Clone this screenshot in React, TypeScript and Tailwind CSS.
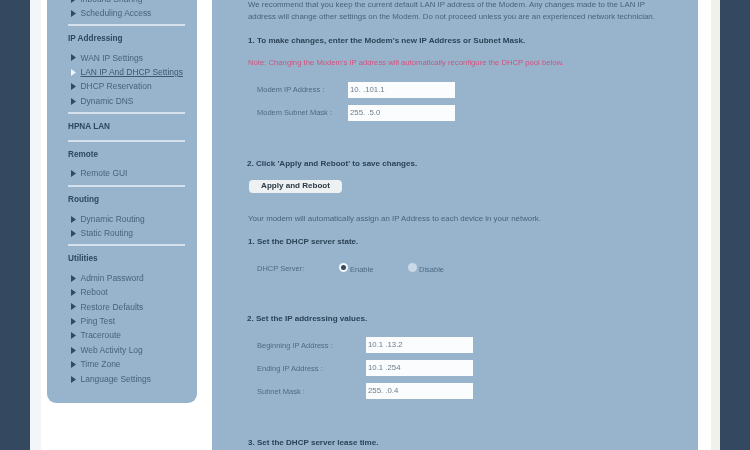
function Arrow({ active }: { active?: boolean }) {
  return (
    <svg width="5" height="7" viewBox="0 0 5 7" className="shrink-0">
      <path d="M0 0L5 3.5L0 7Z" fill={active ? "#eef5fb" : "#2f4a63"} />
    </svg>
  );
}

function NavItem({ label, active }: { label: string; active?: boolean }) {
  return (
    <div className="flex h-[14.45px] items-center gap-[4.5px] pl-[24px]">
      <Arrow active={active} />
      <span className={active ? "text-[8.45px] text-[#3c5874] underline" : "text-[8.45px] text-[#46637e]"}>{label}</span>
    </div>
  );
}

function Group({ title, items, bottom }: { title: string; items: { label: string; active?: boolean }[]; bottom: string }) {
  return (
    <div>
      <div className="flex h-[23px] items-center pl-[21px] pt-[3px] text-[8.2px] font-bold text-[#2c4861]">{title}</div>
      <div className={"mt-[1.8px] " + bottom}>
        {items.map((i) => (
          <NavItem key={i.label} label={i.label} active={i.active} />
        ))}
      </div>
    </div>
  );
}

function Divider() {
  return <div className="ml-[21px] mr-[12px] h-[2px] bg-[#d5e2ee]" />;
}

function Heading({ children, className }: { children: string; className: string }) {
  return <div className={"text-[8.05px] font-bold leading-[12px] text-[#2b4358] " + className}>{children}</div>;
}

function Field({ label, value, labelWidth, inputWidth, className }: { label: string; value: string; labelWidth: string; inputWidth: string; className: string }) {
  return (
    <div className={"flex items-center text-[7.5px] text-[#4c6a85] " + className}>
      <span className={labelWidth}>{label}</span>
      <div className={"flex h-[16px] items-center bg-[#fbfcfd] pl-[2px] text-[7.8px] text-[#6d7d8c] " + inputWidth}>{value}</div>
    </div>
  );
}

function Radio({ checked, label, width }: { checked?: boolean; label: string; width: string }) {
  return (
    <div className={"flex items-center gap-[2px] " + width}>
      <span className={"flex h-[9px] w-[9px] -translate-y-[1px] items-center justify-center rounded-full " + (checked ? "bg-[#f4f7fa]" : "bg-[#c9d9e8]")}>
        {checked ? <span className="h-[5px] w-[5px] rounded-full bg-[#344a5e]" /> : null}
      </span>
      <span className="translate-y-[1px] text-[7.5px] text-[#4c6a85]">{label}</span>
    </div>
  );
}

export default function App() {
  return (
    <div
      className="flex h-[450px] w-[750px] overflow-hidden bg-[#34495f] px-[30px] blur-[0.6px]"
      style={{ fontFamily: '"Liberation Sans", Arial, sans-serif' }}
    >
      <div className="flex h-full w-[690px] bg-white">
        <div className="h-full w-[11px] shrink-0 bg-[#f3f6f9]" />
        <aside className="ml-[6px] h-[403px] w-[150px] shrink-0 overflow-hidden rounded-b-[9px] bg-[#98b4cc]">
          <div className="mt-[-8px]">
            <div className="pb-[3px]">
              <NavItem label="Inbound Sharing" />
              <NavItem label="Scheduling Access" />
            </div>
            <Divider />
            <Group title="IP Addressing" bottom="pb-[3.4px]" items={[{ label: "WAN IP Settings" }, { label: "LAN IP And DHCP Settings", active: true }, { label: "DHCP Reservation" }, { label: "Dynamic DNS" }]} />
            <Divider />
            <div className="flex h-[26px] items-center pl-[21px] text-[8.2px] font-bold text-[#2c4861]">HPNA LAN</div>
            <Divider />
            <Group title="Remote" bottom="pb-[4px]" items={[{ label: "Remote GUI" }]} />
            <Divider />
            <Group title="Routing" bottom="pb-[3.3px]" items={[{ label: "Dynamic Routing" }, { label: "Static Routing" }]} />
            <Divider />
            <Group title="Utilities" bottom="pb-0" items={[{ label: "Admin Password" }, { label: "Reboot" }, { label: "Restore Defaults" }, { label: "Ping Test" }, { label: "Traceroute" }, { label: "Web Activity Log" }, { label: "Time Zone" }, { label: "Language Settings" }]} />
          </div>
        </aside>
        <main className="ml-[15px] h-full w-[486px] shrink-0 overflow-hidden bg-[#98b4cc] pl-[36px]">
          <p className="mt-[-1px] w-[410px] text-[7.85px] leading-[12px] text-[#46637e]">
            We recommend that you keep the current default LAN IP address of the Modem. Any changes made to the LAN IP address will change other settings on the Modem. Do not proceed unless you are an experienced network technician.
          </p>
          <Heading className="mt-[12px]">1. To make changes, enter the Modem's new IP Address or Subnet Mask.</Heading>
          <div className="mt-[10px] text-[7.7px] leading-[12px] text-[#d2527f]">Note: Changing the Modem's IP address will automatically reconfigure the DHCP pool below.</div>
          <Field className="ml-[9px] mt-[13px]" labelWidth="w-[91px]" inputWidth="w-[107px]" label="Modem IP Address :" value="10.    .101.1" />
          <Field className="ml-[9px] mt-[7px]" labelWidth="w-[91px]" inputWidth="w-[107px]" label="Modem Subnet Mask :" value="255.      .5.0" />
          <Heading className="ml-[-1px] mt-[37px]">2. Click 'Apply and Reboot' to save changes.</Heading>
          <button className="ml-[1px] mt-[10px] flex h-[13px] w-[93px] items-center justify-center rounded-[4px] bg-[#eef1f2] text-[8.05px] font-bold text-[#2b3a46]">Apply and Reboot</button>
          <p className="mt-[20px] text-[7.9px] leading-[12px] text-[#46637e]">Your modem will automatically assign an IP Address to each device in your network.</p>
          <Heading className="mt-[11px]">1. Set the DHCP server state.</Heading>
          <div className="ml-[9px] mt-[15px] flex items-center text-[7.5px] text-[#4c6a85]">
            <span className="w-[82px]">DHCP Server:</span>
            <Radio checked label="Enable" width="w-[69px]" />
            <Radio label="Disable" width="w-[60px]" />
          </div>
          <Heading className="ml-[-1px] mt-[39px]">2. Set the IP addressing values.</Heading>
          <Field className="ml-[9px] mt-[12px]" labelWidth="w-[109px]" inputWidth="w-[107px]" label="Beginning IP Address :" value="10.1    .13.2" />
          <Field className="ml-[9px] mt-[7px]" labelWidth="w-[109px]" inputWidth="w-[107px]" label="Ending IP Address :" value="10.1      .254" />
          <Field className="ml-[9px] mt-[7px]" labelWidth="w-[109px]" inputWidth="w-[107px]" label="Subnet Mask :" value="255.      .0.4" />
          <Heading className="mt-[38px]">3. Set the DHCP server lease time.</Heading>
        </main>
        <div className="h-full w-[13px] shrink-0 bg-white" />
        <div className="h-full w-[9px] shrink-0 bg-[#f0f1eb]" />
      </div>
    </div>
  );
}
